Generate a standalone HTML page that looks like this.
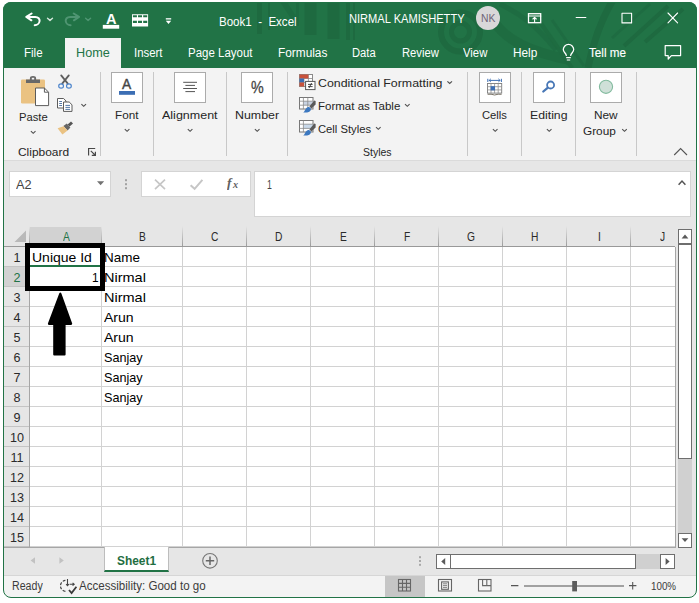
<!DOCTYPE html>
<html lang="en"><head><meta charset="utf-8"><title>Book1 - Excel</title>
<style>
html,body{margin:0;padding:0;background:#fff;}
body{width:699px;height:603px;overflow:hidden;position:relative;font-family:"Liberation Sans",sans-serif;}
#app{position:absolute;left:0;top:0;width:699px;height:603px;overflow:hidden;clip-path:inset(2px 2px 5.5px 3px round 8px);}
#app div,#app svg{position:absolute;box-sizing:border-box;}
.t{position:absolute;white-space:pre;line-height:20px;height:20px;transform-origin:0 0;}
#frame{position:absolute;left:3px;top:2px;width:694px;height:595.5px;border:1px solid #217346;border-radius:8px;box-sizing:border-box;pointer-events:none;}
</style></head><body>
<div id="app">
<div style="left:0px;top:0px;width:699px;height:68px;background:#217346;"></div>
<div style="left:0px;top:68px;width:699px;height:92px;background:#f3f3f3;"></div>
<div style="left:0px;top:160px;width:699px;height:67px;background:#e6e6e6;border-top:1px solid #dadada;"></div>
<div style="left:0px;top:227px;width:699px;height:20px;background:#e6e6e6;"></div>
<div style="left:0px;top:247px;width:699px;height:300px;background:#ffffff;"></div>
<div style="left:0px;top:547px;width:699px;height:28px;background:#e6e6e6;"></div>
<div style="left:0px;top:575px;width:699px;height:28px;background:#f3f3f3;border-top:1px solid #d6d6d6;"></div>
<svg style="left:0;top:0" width="699" height="68" viewBox="0 0 699 68">
<g fill="#1e6a40">
<rect x="257" y="0" width="5" height="34"/><rect x="268" y="0" width="2" height="30"/>
<path d="M275 2 H287 L296 16 V2 H299 V26 H296 L280 2 Z" opacity="0.7"/>
<rect x="304.5" y="0" width="12" height="35"/><rect x="327.5" y="0" width="12" height="39"/>
<rect x="346" y="0" width="4" height="40"/><rect x="353" y="0" width="2" height="40"/>
</g>
<g fill="none" stroke="#1e6a40">
<circle cx="460.5" cy="32" r="9" stroke-width="5"/><circle cx="460.5" cy="32" r="19.5" stroke-width="6"/>
<path d="M493 20 C 505 40 530 52 570 60" stroke-width="10" opacity="0.8"/>
<path d="M500 4 C 520 14 535 24 556 50" stroke-width="5" opacity="0.7"/>
<path d="M588 68 Q 596 28 613 0" stroke-width="7"/>
<path d="M540 22 L572 68" stroke-width="4" opacity="0.8"/><path d="M552 20 L584 66" stroke-width="3" opacity="0.7"/>
<path d="M624 46 L668 6" stroke-width="4"/><path d="M645 42 L683 9" stroke-width="4"/>
<path d="M612 38 L650 4" stroke-width="3" opacity="0.7"/>
</g></svg>
<div style="left:65px;top:38px;width:56px;height:31px;background:#f3f3f3;"></div>
<svg style="left:0;top:0" width="699" height="68" viewBox="0 0 699 68" fill="none" stroke="#fff" stroke-linecap="round" stroke-linejoin="round">
<!-- undo -->
<path d="M31.6 13.5 L26.3 16.9 L31.4 20.3" stroke-width="2"/>
<path d="M27 16.9 H35.2 C38.4 16.9 39.8 19 39.6 21 C39.3 23.6 37 25.2 34.7 25.2" stroke-width="2"/>
<path d="M47.5 18.2 L50 20.4 L52.5 18.2" stroke-width="1.4" stroke="#d4e6db"/>
<!-- redo (dim) -->
<g stroke="#4f9572">
<path d="M73.7 13.5 L79 16.9 L73.9 20.3" stroke-width="2"/>
<path d="M78.3 16.9 H70.1 C66.9 16.9 65.5 19 65.7 21 C66 23.6 68.3 25.2 70.6 25.2" stroke-width="2"/>
<path d="M85.6 18.2 L88.1 20.4 L90.6 18.2" stroke-width="1.4"/>
</g>
<!-- font colour bar -->
<rect x="102.8" y="24.9" width="16.4" height="3.8" fill="#fff" stroke="none"/>
<!-- table -->
<path fill-rule="evenodd" stroke="none" fill="#fff" d="M132 14.3 H148.1 V26.5 H132 Z M132.9 15.2 V17.3 H136.9 V15.2 Z M138 15.2 V17.3 H142 V15.2 Z M143.2 15.2 V17.3 H147.2 V15.2 Z M132.9 20.8 V23 H136.9 V20.8 Z M138 20.8 V23 H142 V20.8 Z M143.2 20.8 V23 H147.2 V20.8 Z"/>
<!-- customize QAT -->
<rect x="165.8" y="18.2" width="5.4" height="1.3" fill="#fff" stroke="none"/>
<path d="M165.8 20.8 H171.2 L168.5 24 Z" fill="#fff" stroke="none"/>
<!-- ribbon display -->
<rect x="528.5" y="13.7" width="12.2" height="9" stroke-width="1.3" stroke-linejoin="miter"/>
<path d="M528.5 16 H540.7" stroke-width="1.1"/>
<path d="M534.6 22.4 V17.6 M532.9 19 L534.6 17.3 L536.3 19" stroke-width="1.1"/>
<!-- min / max / close -->
<path d="M576.2 17.5 H585.8" stroke-width="1.2"/>
<rect x="622" y="13.3" width="9.6" height="9.6" stroke-width="1.1"/>
<path d="M668 13 L677.6 22.8 M677.6 13 L668 22.8" stroke-width="1.1"/>
<!-- lightbulb -->
<path d="M566.3 55.4 C566.3 53.4 563.3 52.4 563.3 49.6 A5.2 5.2 0 0 1 573.7 49.6 C573.7 52.4 570.7 53.4 570.7 55.4" stroke-width="1.3"/>
<path d="M566.2 57.6 H570.8 M566.8 60 H570.2" stroke-width="1.2" stroke-linecap="butt"/>
<!-- comment -->
<path d="M665.2 45.6 H680.6 V55.6 H671.4 L668.2 59 V55.6 H665.2 Z" stroke-width="1.2"/>
</svg>
<div style="left:475.8px;top:5.8px;width:24.4px;height:24.4px;background:#d9d8d9;border-radius:50%;"></div>
<div style="left:99.5px;top:72px;width:1px;height:84px;background:#c8c8c8;"></div>
<div style="left:153.1px;top:72px;width:1px;height:84px;background:#c8c8c8;"></div>
<div style="left:226px;top:72px;width:1px;height:84px;background:#c8c8c8;"></div>
<div style="left:286.9px;top:72px;width:1px;height:84px;background:#c8c8c8;"></div>
<div style="left:467px;top:72px;width:1px;height:84px;background:#c8c8c8;"></div>
<div style="left:520.9px;top:72px;width:1px;height:84px;background:#c8c8c8;"></div>
<div style="left:575px;top:72px;width:1px;height:84px;background:#c8c8c8;"></div>
<div style="left:635.9px;top:72px;width:1px;height:84px;background:#c8c8c8;"></div>
<div style="left:111px;top:72px;width:32px;height:31px;background:#ffffff;border:1px solid #ababab;"></div>
<div style="left:174px;top:72px;width:32px;height:31px;background:#ffffff;border:1px solid #ababab;"></div>
<div style="left:241px;top:72px;width:32px;height:31px;background:#ffffff;border:1px solid #ababab;"></div>
<div style="left:479px;top:72px;width:32px;height:31px;background:#ffffff;border:1px solid #ababab;"></div>
<div style="left:533px;top:72px;width:32px;height:31px;background:#ffffff;border:1px solid #ababab;"></div>
<div style="left:590px;top:72px;width:32px;height:31px;background:#ffffff;border:1px solid #ababab;"></div>
<svg style="left:0;top:68px" width="699" height="92" viewBox="0 68 699 92"><rect x="21" y="79.5" width="24" height="24" rx="1.2" fill="#eac282"/><path d="M26 83 V79.4 H29.9 V78.2 A3.1 2.3 0 0 1 36.1 78.2 V79.4 H40 V83 Z" fill="#686868"/><rect x="31.8" y="77.8" width="2.4" height="1.7" fill="#f3f3f3"/><path d="M35.5 88 H44.4 L48.6 92.2 V105.6 H35.5 Z" fill="#fff" stroke="#5c5c5c" stroke-width="1"/><path d="M44.4 88 V92.2 H48.6" fill="none" stroke="#5c5c5c" stroke-width="1"/><path d="M30.7 131 m0.2 0.1 l2.3 2.2 l2.3 -2.2" fill="none" stroke="#505050" stroke-width="1.15"/><g fill="none" stroke="#5e5e5e" stroke-width="1.8" stroke-linecap="round"><path d="M61.2 75.4 L67.8 83.6 M68.8 75.4 L62.2 83.6"/></g><ellipse cx="61.1" cy="86" rx="2.4" ry="2.2" fill="none" stroke="#4f86cc" stroke-width="1.2"/><ellipse cx="68.9" cy="86" rx="2.4" ry="2.2" fill="none" stroke="#4f86cc" stroke-width="1.2"/><g fill="#fff" stroke="#5c5c5c" stroke-width="1"><path d="M57.5 98.5 H63.6 L66 101 V108 H57.5 Z"/><path d="M63.5 102 H69.2 L72 104.8 V111.4 H63.5 Z"/></g><g stroke="#41699c" stroke-width="0.9"><path d="M59.2 101.5 H62 M59.2 103.5 H62 M59.2 105.5 H62 M65.4 105.4 H70 M65.4 107.4 H70 M65.4 109.4 H70"/></g><path d="M81.2 104 m0.2 0.1 l2.3 2.2 l2.3 -2.2" fill="none" stroke="#505050" stroke-width="1.15"/><path d="M67.6 124.4 L71 121.4 L73 123.6 L69.6 126.6 Z" fill="#555"/><path d="M63.4 126 L66.8 123.6 L70.4 127.6 L67.6 130.4 Z" fill="#666"/><path d="M57.6 128.2 L63.6 126.2 L67.6 130.6 L62.4 134.6 Z" fill="#eac282"/><path d="M88.6 155.4 V148.5 H95.2" fill="none" stroke="#484848" stroke-width="1.15"/><path d="M90.8 150.8 L95 155 M95.4 151.8 V155.4 H91.8" fill="none" stroke="#484848" stroke-width="1.15"/><rect x="119" y="91" width="16" height="3.8" fill="#3c6eb4"/><path d="M124.6 129 m0.2 0.1 l2.3 2.2 l2.3 -2.2" fill="none" stroke="#505050" stroke-width="1.15"/><g stroke="#555" stroke-width="1"><path d="M183.2 82.3 H197 M185.4 85.4 H195 M183.2 88.5 H197 M185.4 91.6 H195"/></g><path d="M187.6 129 m0.2 0.1 l2.3 2.2 l2.3 -2.2" fill="none" stroke="#505050" stroke-width="1.15"/><path d="M254.7 129 m0.2 0.1 l2.3 2.2 l2.3 -2.2" fill="none" stroke="#505050" stroke-width="1.15"/><rect x="299.5" y="74.5" width="13" height="12" fill="#fff" stroke="#8a8a8a" stroke-width="1"/><path d="M299.5 78.5 H312.5 M299.5 82.5 H312.5 M304 74.5 V86.5 M308.4 74.5 V86.5" stroke="#8a8a8a" stroke-width="0.8" fill="none"/><rect x="299.5" y="74.5" width="4.5" height="4" fill="#c8523c"/><rect x="304" y="74.5" width="4.4" height="4" fill="#c8523c"/><rect x="299.5" y="78.5" width="4.5" height="4" fill="#3c6eb4"/><rect x="299.5" y="82.5" width="4.5" height="4" fill="#c8523c"/><rect x="305.6" y="81.4" width="9.4" height="8.2" fill="#fff" stroke="#555" stroke-width="1"/><path d="M308 84.4 H312.6 M308 86.6 H312.6 M311.6 83 L309 88" stroke="#333" stroke-width="0.9" fill="none"/><rect x="299.5" y="97.5" width="13.5" height="11.5" fill="#fff" stroke="#777" stroke-width="1"/><rect x="303.4" y="101.2" width="9.6" height="4" fill="#c9d3e2"/><path d="M299.5 101.2 H313 M299.5 105.2 H313 M303.4 97.5 V109 M307.8 97.5 V109" stroke="#8a8a8a" stroke-width="0.8" fill="none"/><path d="M309.4 106.4 L314.2 100.6 L315.6 101 V104.6 L311.4 108.4 Z" fill="#5a5a5a"/><path d="M303.2 112.4 C305 111.4 305 108.4 307.6 107.2 C309.6 106.6 311.4 108.2 310.8 110 C310 112.4 306 113 303.2 112.4 Z" fill="#3c78c0"/><rect x="299.5" y="120.5" width="13.5" height="11.5" fill="#fff" stroke="#777" stroke-width="1"/><rect x="303.4" y="124.2" width="9.6" height="4.4" fill="#c9d9ea"/><path d="M299.5 124.2 H313 M299.5 128.4 H313 M303.4 120.5 V132" stroke="#8a8a8a" stroke-width="0.8" fill="none"/><path d="M309.4 129.4 L314.2 123.6 L315.6 124 V127.6 L311.4 131.4 Z" fill="#5a5a5a"/><path d="M303.2 135.4 C305 134.4 305 131.4 307.6 130.2 C309.6 129.6 311.4 131.2 310.8 133 C310 135.4 306 136 303.2 135.4 Z" fill="#3c78c0"/><path d="M447.2 81.2 m0.2 0.1 l2.3 2.2 l2.3 -2.2" fill="none" stroke="#505050" stroke-width="1.15"/><path d="M404.8 104 m0.2 0.1 l2.3 2.2 l2.3 -2.2" fill="none" stroke="#505050" stroke-width="1.15"/><path d="M375.8 127 m0.2 0.1 l2.3 2.2 l2.3 -2.2" fill="none" stroke="#505050" stroke-width="1.15"/><g stroke="#3c6eb4" stroke-width="1" fill="none"><path d="M487.8 78.8 V82 M501.4 78.8 V82 M488.8 80.4 H500.4 M490.8 78.9 L489.2 80.4 L490.8 81.9 M498.4 78.9 L500 80.4 L498.4 81.9"/></g><rect x="487.5" y="83.5" width="14.2" height="9.6" fill="#fff" stroke="#7c7c7c" stroke-width="0.9"/><path d="M487.5 86.7 H501.7 M487.5 89.9 H501.7 M491 83.5 V93.1 M494.6 83.5 V93.1 M498.2 83.5 V93.1" stroke="#8e8e8e" stroke-width="0.8" fill="none"/><rect x="490.6" y="86.2" width="4.4" height="4.2" fill="#3c6eb4"/><path d="M487.6 94.3 Q491 93.8 494.6 95 Q498.2 93.8 501.6 94.3" fill="none" stroke="#7a7468" stroke-width="1"/><path d="M492.7 129 m0.2 0.1 l2.3 2.2 l2.3 -2.2" fill="none" stroke="#505050" stroke-width="1.15"/><circle cx="550.6" cy="85" r="3.5" fill="#fff" stroke="#4877b6" stroke-width="1.8"/><path d="M547.6 87.8 L543.3 91.5" stroke="#4877b6" stroke-width="2.3" stroke-linecap="round"/><path d="M546.7 129 m0.2 0.1 l2.3 2.2 l2.3 -2.2" fill="none" stroke="#505050" stroke-width="1.15"/><circle cx="606" cy="86.8" r="6.6" fill="#cfe0d8" stroke="#83bb9f" stroke-width="1.1"/><path d="M622 129 m0.2 0.1 l2.3 2.2 l2.3 -2.2" fill="none" stroke="#505050" stroke-width="1.15"/><path d="M674.2 155 L680.6 148.6 L687 155" fill="none" stroke="#555" stroke-width="1.1"/></svg>
<div style="left:9.4px;top:171.2px;width:101.3px;height:25.8px;background:#fff;border:1px solid #d4d4d4;"></div>
<div style="left:141.2px;top:171.2px;width:109.5px;height:25.8px;background:#fff;border:1px solid #d4d4d4;"></div>
<div style="left:253.9px;top:171.2px;width:436.9px;height:45.4px;background:#fff;border:1px solid #d4d4d4;"></div>
<svg style="left:0;top:160px" width="699" height="67" viewBox="0 160 699 67"><path d="M97 181.2 H104.2 L100.6 185.2 Z" fill="#727272"/><g fill="#a2a2a2"><rect x="125" y="179.2" width="2" height="2"/><rect x="125" y="183.2" width="2" height="2"/><rect x="125" y="187.2" width="2" height="2"/></g><path d="M155 179.6 L165 189.2 M165 179.6 L155 189.2" stroke="#c6c6c6" stroke-width="1.7" fill="none"/><path d="M190.6 185.2 L194.6 188.8 L202.4 179.8" stroke="#c6c6c6" stroke-width="2" fill="none"/><path d="M678.6 184.8 L682 181 L685.4 184.8" stroke="#555" stroke-width="1.5" fill="none"/></svg>
<div style="left:29px;top:227px;width:72px;height:19px;background:#d2d2d2;"></div>
<div style="left:101px;top:226px;width:1px;height:20px;background:linear-gradient(#e6e6e6,#9c9c9c);"></div>
<div style="left:182px;top:226px;width:1px;height:20px;background:linear-gradient(#e6e6e6,#9c9c9c);"></div>
<div style="left:246px;top:226px;width:1px;height:20px;background:linear-gradient(#e6e6e6,#9c9c9c);"></div>
<div style="left:310px;top:226px;width:1px;height:20px;background:linear-gradient(#e6e6e6,#9c9c9c);"></div>
<div style="left:374px;top:226px;width:1px;height:20px;background:linear-gradient(#e6e6e6,#9c9c9c);"></div>
<div style="left:438px;top:226px;width:1px;height:20px;background:linear-gradient(#e6e6e6,#9c9c9c);"></div>
<div style="left:502px;top:226px;width:1px;height:20px;background:linear-gradient(#e6e6e6,#9c9c9c);"></div>
<div style="left:566px;top:226px;width:1px;height:20px;background:linear-gradient(#e6e6e6,#9c9c9c);"></div>
<div style="left:630px;top:226px;width:1px;height:20px;background:linear-gradient(#e6e6e6,#9c9c9c);"></div>
<div style="left:29px;top:226px;width:1px;height:20px;background:linear-gradient(#e6e6e6,#9c9c9c);"></div>
<div style="left:4px;top:246px;width:671px;height:1px;background:#999999;"></div>
<svg style="left:14px;top:230px" width="13" height="13" viewBox="0 0 13 13"><path d="M12 0.5 V12 H0.5 Z" fill="#b9b9b9"/></svg>
<div style="left:4px;top:247px;width:25px;height:300px;background:#e6e6e6;"></div>
<div style="left:4px;top:266px;width:25px;height:20px;background:#d2d2d2;"></div>
<div style="left:4px;top:266px;width:25px;height:1px;background:#c4c4c4;"></div>
<div style="left:30px;top:266px;width:645px;height:1px;background:#d2d2d2;"></div>
<div style="left:4px;top:286px;width:25px;height:1px;background:#c4c4c4;"></div>
<div style="left:30px;top:286px;width:645px;height:1px;background:#d2d2d2;"></div>
<div style="left:4px;top:306px;width:25px;height:1px;background:#c4c4c4;"></div>
<div style="left:30px;top:306px;width:645px;height:1px;background:#d2d2d2;"></div>
<div style="left:4px;top:326px;width:25px;height:1px;background:#c4c4c4;"></div>
<div style="left:30px;top:326px;width:645px;height:1px;background:#d2d2d2;"></div>
<div style="left:4px;top:346px;width:25px;height:1px;background:#c4c4c4;"></div>
<div style="left:30px;top:346px;width:645px;height:1px;background:#d2d2d2;"></div>
<div style="left:4px;top:366px;width:25px;height:1px;background:#c4c4c4;"></div>
<div style="left:30px;top:366px;width:645px;height:1px;background:#d2d2d2;"></div>
<div style="left:4px;top:386px;width:25px;height:1px;background:#c4c4c4;"></div>
<div style="left:30px;top:386px;width:645px;height:1px;background:#d2d2d2;"></div>
<div style="left:4px;top:406px;width:25px;height:1px;background:#c4c4c4;"></div>
<div style="left:30px;top:406px;width:645px;height:1px;background:#d2d2d2;"></div>
<div style="left:4px;top:426px;width:25px;height:1px;background:#c4c4c4;"></div>
<div style="left:30px;top:426px;width:645px;height:1px;background:#d2d2d2;"></div>
<div style="left:4px;top:446px;width:25px;height:1px;background:#c4c4c4;"></div>
<div style="left:30px;top:446px;width:645px;height:1px;background:#d2d2d2;"></div>
<div style="left:4px;top:466px;width:25px;height:1px;background:#c4c4c4;"></div>
<div style="left:30px;top:466px;width:645px;height:1px;background:#d2d2d2;"></div>
<div style="left:4px;top:486px;width:25px;height:1px;background:#c4c4c4;"></div>
<div style="left:30px;top:486px;width:645px;height:1px;background:#d2d2d2;"></div>
<div style="left:4px;top:506px;width:25px;height:1px;background:#c4c4c4;"></div>
<div style="left:30px;top:506px;width:645px;height:1px;background:#d2d2d2;"></div>
<div style="left:4px;top:526px;width:25px;height:1px;background:#c4c4c4;"></div>
<div style="left:30px;top:526px;width:645px;height:1px;background:#d2d2d2;"></div>
<div style="left:4px;top:546px;width:25px;height:1px;background:#c4c4c4;"></div>
<div style="left:30px;top:546px;width:645px;height:1px;background:#d2d2d2;"></div>
<div style="left:29px;top:247px;width:1px;height:300px;background:#a6a6a6;"></div>
<div style="left:101px;top:247px;width:1px;height:300px;background:#d2d2d2;"></div>
<div style="left:182px;top:247px;width:1px;height:300px;background:#d2d2d2;"></div>
<div style="left:246px;top:247px;width:1px;height:300px;background:#d2d2d2;"></div>
<div style="left:310px;top:247px;width:1px;height:300px;background:#d2d2d2;"></div>
<div style="left:374px;top:247px;width:1px;height:300px;background:#d2d2d2;"></div>
<div style="left:438px;top:247px;width:1px;height:300px;background:#d2d2d2;"></div>
<div style="left:502px;top:247px;width:1px;height:300px;background:#d2d2d2;"></div>
<div style="left:566px;top:247px;width:1px;height:300px;background:#d2d2d2;"></div>
<div style="left:630px;top:247px;width:1px;height:300px;background:#d2d2d2;"></div>
<div style="left:675px;top:227px;width:24px;height:320px;background:#e6e6e6;"></div>
<div style="left:675px;top:247px;width:1px;height:300px;background:#a6a6a6;"></div>
<div style="left:4px;top:547px;width:672px;height:1px;background:#a6a6a6;"></div>
<div style="left:30px;top:265px;width:71px;height:2px;background:#217346;"></div>
<div style="left:25px;top:242.5px;width:80px;height:48px;border:5px solid #000;"></div>
<svg style="left:40px;top:288px" width="40" height="72" viewBox="40 288 40 72"><path d="M59.2 293.6 Q60.3 291.6 61.4 293.6 L72.2 323.6 Q72.4 325 71 325 H65.6 V354.6 Q65.6 355.6 64.6 355.6 H54.2 Q53.2 355.6 53.2 354.6 V325 H49 Q47.6 325 47.9 323.6 Z" fill="#000"/></svg>
<div style="left:678px;top:229px;width:14px;height:319px;background:#d0d0d0;"></div>
<div style="left:678px;top:229px;width:14px;height:15px;background:#fff;border:1px solid #6e6e6e;"></div>
<div style="left:678px;top:244px;width:14px;height:215px;background:#fff;border:1px solid #6e6e6e;"></div>
<div style="left:678px;top:533px;width:14px;height:15px;background:#fff;border:1px solid #6e6e6e;"></div>
<svg style="left:678px;top:229px" width="14" height="319" viewBox="0 0 14 319"><path d="M3.6 9.4 L7 5.6 L10.4 9.4 Z M3.6 309.2 L7 313 L10.4 309.2 Z" fill="#5a5a5a"/></svg>
<div style="left:104.3px;top:547px;width:64.8px;height:25px;background:#fff;border-bottom:2.4px solid #217346;border-right:1px solid #bdbdbd;border-left:1px solid #bdbdbd;"></div>
<svg style="left:0;top:547px" width="699" height="28" viewBox="0 547 699 28"><path d="M35 557.2 V563.8 L30.6 560.5 Z M59.4 557.2 V563.8 L63.8 560.5 Z" fill="#c2c2c2"/><circle cx="210" cy="560.8" r="7.3" fill="none" stroke="#777" stroke-width="1.1"/><path d="M205.8 560.8 H214.2 M210 556.6 V565" stroke="#666" stroke-width="1.5" fill="none"/><g fill="#a8a8a8"><rect x="419" y="556.2" width="2" height="2"/><rect x="419" y="560" width="2" height="2"/><rect x="419" y="563.8" width="2" height="2"/></g></svg>
<div style="left:436px;top:554px;width:239px;height:15px;background:#d0d0d0;"></div>
<div style="left:436px;top:554px;width:15px;height:15px;background:#fff;border:1px solid #6e6e6e;"></div>
<div style="left:450px;top:554px;width:186px;height:15px;background:#fff;border:1px solid #6e6e6e;"></div>
<div style="left:660px;top:554px;width:15px;height:15px;background:#fff;border:1px solid #6e6e6e;"></div>
<svg style="left:436px;top:554px" width="239" height="15" viewBox="0 0 239 15"><path d="M9.2 4 V11 L5.2 7.5 Z M229.6 4 V11 L233.6 7.5 Z" fill="#5a5a5a"/></svg>
<div style="left:385px;top:576px;width:40px;height:22px;background:#c6c6c6;"></div>
<svg style="left:0;top:575px" width="699" height="28" viewBox="0 575 699 28" fill="none"><path d="M65.4 580.4 A5.4 5.4 0 0 0 66.6 591.4" stroke="#444" stroke-width="1.2" stroke-dasharray="2.8 1.5"/><path d="M67.5 579 V585.4 M66.1 584.2 L67.5 585.6 L68.9 584.2" stroke="#444" stroke-width="1.1"/><path d="M69.6 584.2 H74 M72.6 582.8 L74.2 584.2 L72.6 585.6" stroke="#444" stroke-width="1.1"/><path d="M69 590 L71.6 593 L76.4 586.8" stroke="#3a3a3a" stroke-width="1.8"/><g stroke="#666" stroke-width="1.1"><rect x="398.5" y="579.5" width="12" height="11.5"/><path d="M398.5 583.4 H410.5 M398.5 587.2 H410.5 M402.5 579.5 V591 M406.5 579.5 V591"/></g><g stroke="#666" stroke-width="1.1"><rect x="438.5" y="579.5" width="13" height="11.5"/><rect x="441.6" y="581.9" width="6.8" height="7.4"/><path d="M443 583.8 H447 M443 585.6 H447 M443 587.4 H447" stroke-width="0.8"/></g><g stroke="#666" stroke-width="1.1"><rect x="478.5" y="579.5" width="12.5" height="11.5"/><path d="M482.6 579.5 V585.6 H491 M486.8 579.5 V585.6"/></g><path d="M511 585.6 H518.4" stroke="#555" stroke-width="1.1"/><path d="M524 586 H624" stroke="#505050" stroke-width="1.2"/><rect x="572.2" y="581" width="4.8" height="10.4" fill="#5c5c5c"/><path d="M629 585.6 H636.4 M632.7 582 V589.4" stroke="#555" stroke-width="1.1"/></svg>
<span class="t" id="t0" style="left:218.56px;top:12.00px;font-size:12.3px;color:#ffffff;transform:scaleX(0.9387);">Book1  -  Excel</span>
<span class="t" id="t1" style="left:348.70px;top:9.00px;font-size:12.3px;color:#ffffff;transform:scaleX(0.9030);">NIRMAL KAMISHETTY</span>
<span class="t" id="t2" style="left:481.00px;top:9.00px;font-size:10.4px;color:#6f6478;transform:scaleX(0.9928);">NK</span>
<span class="t" id="t3" style="left:24.08px;top:43.00px;font-size:12.5px;color:#ffffff;transform:scaleX(0.9224);">File</span>
<span class="t" id="t4" style="left:75.99px;top:43.00px;font-size:12.5px;color:#217346;transform:scaleX(1.0126);">Home</span>
<span class="t" id="t5" style="left:134.49px;top:43.00px;font-size:12.5px;color:#ffffff;transform:scaleX(0.9127);">Insert</span>
<span class="t" id="t6" style="left:188.48px;top:43.00px;font-size:12.5px;color:#ffffff;transform:scaleX(0.9193);">Page Layout</span>
<span class="t" id="t7" style="left:277.65px;top:43.00px;font-size:12.5px;color:#ffffff;transform:scaleX(0.9480);">Formulas</span>
<span class="t" id="t8" style="left:352.10px;top:43.00px;font-size:12.5px;color:#ffffff;transform:scaleX(0.8958);">Data</span>
<span class="t" id="t9" style="left:401.50px;top:43.00px;font-size:12.5px;color:#ffffff;transform:scaleX(0.8985);">Review</span>
<span class="t" id="t10" style="left:463.00px;top:43.00px;font-size:12.5px;color:#ffffff;transform:scaleX(0.9052);">View</span>
<span class="t" id="t11" style="left:513.45px;top:43.00px;font-size:12.5px;color:#ffffff;transform:scaleX(0.9452);">Help</span>
<span class="t" id="t12" style="left:589.00px;top:43.00px;font-size:12.5px;color:#ffffff;transform:scaleX(0.9334);-webkit-text-stroke:0.15px #fff;">Tell me</span>
<span class="t" id="t13" style="left:19.00px;top:107.00px;font-size:11.7px;color:#262626;transform:scaleX(0.9596);">Paste</span>
<span class="t" id="t14" style="left:18.20px;top:142.00px;font-size:11.6px;color:#262626;transform:scaleX(1.0289);">Clipboard</span>
<span class="t" id="t15" style="left:114.80px;top:105.00px;font-size:11.7px;color:#262626;transform:scaleX(1.0025);">Font</span>
<span class="t" id="t16" style="left:162.20px;top:105.00px;font-size:11.7px;color:#262626;transform:scaleX(1.0697);">Alignment</span>
<span class="t" id="t17" style="left:235.00px;top:105.00px;font-size:11.7px;color:#262626;transform:scaleX(1.0606);">Number</span>
<span class="t" id="t18" style="left:317.70px;top:73.00px;font-size:11.7px;color:#262626;transform:scaleX(1.0582);">Conditional Formatting</span>
<span class="t" id="t19" style="left:318.20px;top:96.00px;font-size:11.7px;color:#262626;transform:scaleX(0.9845);">Format as Table</span>
<span class="t" id="t20" style="left:317.70px;top:119.00px;font-size:11.7px;color:#262626;transform:scaleX(0.9609);">Cell Styles</span>
<span class="t" id="t21" style="left:362.60px;top:142.00px;font-size:11.6px;color:#262626;transform:scaleX(0.9064);">Styles</span>
<span class="t" id="t22" style="left:481.80px;top:105.00px;font-size:11.7px;color:#262626;transform:scaleX(0.9605);">Cells</span>
<span class="t" id="t23" style="left:529.70px;top:105.00px;font-size:11.7px;color:#262626;transform:scaleX(1.0501);">Editing</span>
<span class="t" id="t24" style="left:593.70px;top:105.00px;font-size:11.7px;color:#262626;transform:scaleX(1.0108);">New</span>
<span class="t" id="t25" style="left:583.30px;top:121.00px;font-size:11.7px;color:#262626;transform:scaleX(1.0096);">Group</span>
<span class="t" id="t26" style="left:16.30px;top:175.00px;font-size:12.4px;color:#444444;transform:scaleX(1.0285);">A2</span>
<span class="t" id="t27" style="left:251.40px;top:77.00px;font-size:16.4px;color:#444;transform:scaleX(0.8714);-webkit-text-stroke:0.3px #444;">%</span>
<span class="t" id="t28" style="left:106.30px;top:10.00px;font-size:13.8px;color:#ffffff;transform:scaleX(1.0600);font-weight:bold;">A</span>
<span class="t" id="t29" style="left:122.40px;top:74.00px;font-size:14.2px;color:#444;transform:scaleX(0.9700);-webkit-text-stroke:0.4px #444;">A</span>
<span class="t" id="t30" style="left:266.60px;top:175.00px;font-size:12.3px;color:#444444;transform:scaleX(0.7143);">1</span>
<span class="t" id="t31" style="left:226.60px;top:173.00px;font-size:12.2px;color:#606060;transform:scaleX(1.1000);font-family:'Liberation Serif',serif;font-weight:bold;font-style:italic;">f</span>
<span class="t" id="t32" style="left:232.92px;top:175.00px;font-size:10px;color:#606060;transform:scaleX(1.0167);font-family:'Liberation Serif',serif;font-weight:bold;font-style:italic;">x</span>
<span class="t" id="t33" style="left:62.58px;top:227.00px;font-size:12.2px;color:#217346;transform:scaleX(0.84);">A</span>
<span class="t" id="t34" style="left:139.08px;top:227.00px;font-size:12.2px;color:#2a2a2a;transform:scaleX(0.84);">B</span>
<span class="t" id="t35" style="left:211.30px;top:227.00px;font-size:12.2px;color:#2a2a2a;transform:scaleX(0.84);">C</span>
<span class="t" id="t36" style="left:275.30px;top:227.00px;font-size:12.2px;color:#2a2a2a;transform:scaleX(0.84);">D</span>
<span class="t" id="t37" style="left:339.58px;top:227.00px;font-size:12.2px;color:#2a2a2a;transform:scaleX(0.84);">E</span>
<span class="t" id="t38" style="left:403.87px;top:227.00px;font-size:12.2px;color:#2a2a2a;transform:scaleX(0.84);">F</span>
<span class="t" id="t39" style="left:467.02px;top:227.00px;font-size:12.2px;color:#2a2a2a;transform:scaleX(0.84);">G</span>
<span class="t" id="t40" style="left:531.30px;top:227.00px;font-size:12.2px;color:#2a2a2a;transform:scaleX(0.84);">H</span>
<span class="t" id="t41" style="left:597.58px;top:227.00px;font-size:12.2px;color:#2a2a2a;transform:scaleX(0.84);">I</span>
<span class="t" id="t42" style="left:660.44px;top:227.00px;font-size:12.2px;color:#2a2a2a;transform:scaleX(0.84);">J</span>
<span class="t" id="t43" style="left:13.49px;top:248.00px;font-size:12.6px;color:#2a2a2a;">1</span>
<span class="t" id="t44" style="left:13.49px;top:268.00px;font-size:12.6px;color:#217346;">2</span>
<span class="t" id="t45" style="left:13.49px;top:288.00px;font-size:12.6px;color:#2a2a2a;">3</span>
<span class="t" id="t46" style="left:13.49px;top:308.00px;font-size:12.6px;color:#2a2a2a;">4</span>
<span class="t" id="t47" style="left:13.49px;top:328.00px;font-size:12.6px;color:#2a2a2a;">5</span>
<span class="t" id="t48" style="left:13.49px;top:348.00px;font-size:12.6px;color:#2a2a2a;">6</span>
<span class="t" id="t49" style="left:13.49px;top:368.00px;font-size:12.6px;color:#2a2a2a;">7</span>
<span class="t" id="t50" style="left:13.49px;top:388.00px;font-size:12.6px;color:#2a2a2a;">8</span>
<span class="t" id="t51" style="left:13.49px;top:408.00px;font-size:12.6px;color:#2a2a2a;">9</span>
<span class="t" id="t52" style="left:9.99px;top:428.00px;font-size:12.6px;color:#2a2a2a;">10</span>
<span class="t" id="t53" style="left:10.46px;top:448.00px;font-size:12.6px;color:#2a2a2a;">11</span>
<span class="t" id="t54" style="left:9.99px;top:468.00px;font-size:12.6px;color:#2a2a2a;">12</span>
<span class="t" id="t55" style="left:9.99px;top:488.00px;font-size:12.6px;color:#2a2a2a;">13</span>
<span class="t" id="t56" style="left:9.99px;top:508.00px;font-size:12.6px;color:#2a2a2a;">14</span>
<span class="t" id="t57" style="left:9.99px;top:528.00px;font-size:12.6px;color:#2a2a2a;">15</span>
<span class="t" id="t58" style="left:31.72px;top:248.00px;font-size:12.9px;color:#000000;transform:scaleX(1.0849);">Unique Id</span>
<span class="t" id="t59" style="left:104.36px;top:248.00px;font-size:12.9px;color:#000000;transform:scaleX(1.0447);">Name</span>
<span class="t" id="t60" style="left:92.10px;top:268.00px;font-size:13.2px;color:#000000;transform:scaleX(0.9000);">1</span>
<span class="t" id="t61" style="left:104.27px;top:268.00px;font-size:12.9px;color:#000000;transform:scaleX(1.1252);">Nirmal</span>
<span class="t" id="t62" style="left:104.27px;top:288.00px;font-size:12.9px;color:#000000;transform:scaleX(1.1252);">Nirmal</span>
<span class="t" id="t63" style="left:104.00px;top:308.00px;font-size:12.9px;color:#000000;transform:scaleX(1.0902);">Arun</span>
<span class="t" id="t64" style="left:104.00px;top:328.00px;font-size:12.9px;color:#000000;transform:scaleX(1.0902);">Arun</span>
<span class="t" id="t65" style="left:104.40px;top:348.00px;font-size:12.9px;color:#000000;transform:scaleX(0.9808);">Sanjay</span>
<span class="t" id="t66" style="left:104.40px;top:368.00px;font-size:12.9px;color:#000000;transform:scaleX(0.9808);">Sanjay</span>
<span class="t" id="t67" style="left:104.40px;top:388.00px;font-size:12.9px;color:#000000;transform:scaleX(0.9808);">Sanjay</span>
<span class="t" id="t68" style="left:116.90px;top:551.00px;font-size:12.7px;color:#1f6e42;transform:scaleX(0.9386);font-weight:bold;">Sheet1</span>
<span class="t" id="t69" style="left:11.90px;top:576.00px;font-size:12.0px;color:#3c3c3c;transform:scaleX(0.8850);">Ready</span>
<span class="t" id="t70" style="left:79.20px;top:576.00px;font-size:12.0px;color:#3c3c3c;transform:scaleX(0.9641);">Accessibility: Good to go</span>
<span class="t" id="t71" style="left:651.00px;top:576.00px;font-size:11.8px;color:#3c3c3c;transform:scaleX(0.8311);">100%</span>
</div>
<div id="frame"></div>
</body></html>
